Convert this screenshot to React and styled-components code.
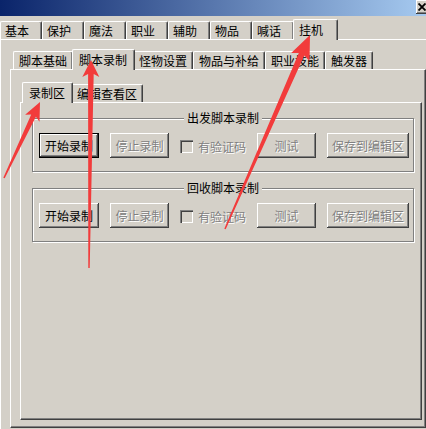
import React from "react";
import styled, { createGlobalStyle, css } from "styled-components";

const GlobalStyle = createGlobalStyle`
  html, body { margin: 0; padding: 0; background: #d4d0c8; }
  body {
    font-family: "SimSun", "Noto Sans CJK SC", sans-serif;
    font-size: 12px;
    color: #000;
  }
  * { box-sizing: border-box; }
`;

const Window = styled.div`
  position: relative;
  width: 426px;
  height: 429px;
  overflow: hidden;
  background: #d4d0c8;
  display: flex;
  flex-direction: column;
`;

const TitleBar = styled.div`
  flex: none;
  height: 16px;
  background: linear-gradient(to right, #0a246a, #a6caf0);
  display: flex;
  justify-content: flex-end;
  align-items: flex-start;
`;

const CloseButton = styled.div`
  flex: none;
  width: 16px;
  height: 14px;
  margin-right: -6px;
  padding-left: 2px;
  background: #d4d0c8;
  box-shadow: inset -1px -1px #404040, inset 1px 1px #fff, inset -2px -2px #808080;
  display: flex;
  align-items: center;
`;

const TabControl = styled.div`
  display: flex;
  flex-direction: column;
  flex: none;
  margin-top: ${(p) => p.$top || 0}px;
`;

const TabStrip = styled.div`
  display: flex;
  align-items: flex-end;
  height: 21px;
  margin-bottom: -1px;
  padding-left: ${(p) => p.$indent}px;
  position: relative;
  z-index: 2;
`;

const Tab = styled.div`
  flex: none;
  height: ${(p) => (p.$active ? 21 : 18)}px;
  ${(p) =>
    p.$w &&
    css`
      width: ${p.$active ? p.$w + 3 : p.$w}px;
    `}
  margin: 0 ${(p) => (p.$active ? -2 : 0)}px ${(p) => (p.$active ? 0 : 1)}px
    ${(p) => (p.$active ? -1 : 0)}px;
  padding: ${(p) => (p.$active ? 2 : 1)}px ${(p) => (p.$active ? p.$pr + 2 : p.$pr)}px 0
    ${(p) => (p.$active ? p.$pl + 1 : p.$pl)}px;
  background: #d4d0c8;
  border-top: 1px solid #fff;
  border-left: 1px solid #fff;
  border-right: 1px solid #404040;
  border-radius: 2px 2px 0 0;
  box-shadow: inset -1px 0 #808080;
  line-height: 16px;
  white-space: nowrap;
  position: relative;
  z-index: ${(p) => (p.$active ? 2 : 1)};
`;

const Panel = styled.div`
  flex: none;
  width: ${(p) => p.$w}px;
  height: ${(p) => p.$h}px;
  padding: ${(p) => p.$pt}px 0 0 ${(p) => p.$pl}px;
  background: #d4d0c8;
  border-top: 1px solid #fff;
  border-left: 1px solid #fff;
  border-right: 1px solid #404040;
  border-bottom: 1px solid #404040;
  box-shadow: inset -1px -1px #808080;
  display: flex;
  flex-direction: column;
  align-items: flex-start;
`;

const GroupBox = styled.div`
  flex: none;
  width: 382px;
  height: 54px;
  border: 1px solid #808080;
  box-shadow: inset 1px 1px #fff, 1px 1px #fff;
  padding: 0 6px;
  display: flex;
  flex-direction: column;
  & + & {
    margin-top: 16px;
  }
`;

const GroupTitle = styled.div`
  margin: -8px auto 0;
  padding: 0 3px;
  line-height: 14px;
  background: #d4d0c8;
  white-space: nowrap;
`;

const ButtonRow = styled.div`
  display: flex;
  align-items: center;
  gap: 11px;
  margin-top: 8px;
`;

const Button = styled.button`
  flex: none;
  width: ${(p) => p.$w}px;
  height: 25px;
  padding: 0;
  margin: 0;
  border: none;
  font: inherit;
  line-height: 14px;
  background: #d4d0c8;
  color: #000;
  box-shadow: inset -1px -1px #404040, inset 1px 1px #fff, inset -2px -2px #808080;
  display: flex;
  align-items: center;
  justify-content: center;
  ${(p) =>
    p.$default &&
    css`
      border: 1px solid #000;
    `}
  &:disabled {
    color: #808080;
    text-shadow: 1px 1px 0 #fff;
  }
`;

const CheckLabel = styled.label`
  flex: none;
  display: flex;
  align-items: center;
  gap: 5px;
  margin-top: 2px;
  color: ${(p) => (p.$disabled ? "#808080" : "#000")};
  text-shadow: ${(p) => (p.$disabled ? "1px 1px 0 #fff" : "none")};
  line-height: 14px;
`;

const CheckBox = styled.span`
  flex: none;
  width: 13px;
  height: 13px;
  background: #d4d0c8;
  box-shadow: inset 1px 1px #808080, inset 2px 2px #404040, inset -1px -1px #fff,
    inset -2px -2px #d4d0c8;
`;

const Overlay = styled.svg`
  position: absolute;
  left: 0;
  top: 0;
  pointer-events: none;
  z-index: 10;
`;

const outerTabs = ["基本", "保护", "魔法", "职业", "辅助", "物品", "喊话", "挂机"];
const midTabs = ["脚本基础", "脚本录制", "怪物设置", "物品与补给", "职业技能", "触发器"];
const innerTabs = ["录制区", "编辑查看区"];

const groups = ["出发脚本录制", "回收脚本录制"];

const arrows = [
  { x1: 4, y1: 178, x2: 40, y2: 102, head: 18, half: 8, neck: 2.6, tail: 0.8 },
  { x1: 89, y1: 268, x2: 91, y2: 60, head: 17, half: 8.5, neck: 2.8, tail: 0.7 },
  { x1: 225, y1: 229, x2: 310, y2: 35, head: 24, half: 10, neck: 3, tail: 0.8 },
];

function arrowPoints({ x1, y1, x2, y2, head, half, neck, tail }) {
  const dx = x2 - x1;
  const dy = y2 - y1;
  const L = Math.hypot(dx, dy);
  const ux = dx / L;
  const uy = dy / L;
  const nx = -uy;
  const ny = ux;
  const p = (d, o) => [x1 + ux * d + nx * o, y1 + uy * d + ny * o];
  const base = L - head;
  const pts = [
    p(0, tail),
    p(base + 3, neck),
    p(base, half),
    p(L, 0),
    p(base, -half),
    p(base + 3, -neck),
    p(0, -tail),
  ];
  return pts.map((q) => q.map((v) => v.toFixed(1)).join(",")).join(" ");
}

function Group({ title, focused }) {
  return (
    <GroupBox>
      <GroupTitle>{title}</GroupTitle>
      <ButtonRow>
        <Button $w={60} $default={focused}>开始录制</Button>
        <Button $w={59} disabled>停止录制</Button>
        <CheckLabel $disabled>
          <CheckBox />
          有验证码
        </CheckLabel>
        <Button $w={59} disabled>测试</Button>
        <Button $w={82} disabled>保存到编辑区</Button>
      </ButtonRow>
    </GroupBox>
  );
}

export default function App() {
  return (
    <>
      <GlobalStyle />
      <Window>
        <TitleBar>
          <CloseButton>
            <svg width="8" height="8" viewBox="0 0 8 8">
              <path d="M0.5 0.5 L7.5 7.5 M7.5 0.5 L0.5 7.5" stroke="#000" strokeWidth="1.8" />
            </svg>
          </CloseButton>
        </TitleBar>

        <TabControl $top={3}>
          <TabStrip $indent={0}>
            {outerTabs.map((t) => (
              <Tab key={t} $w={42} $pl={4} $pr={0} $active={t === "挂机"}>
                {t}
              </Tab>
            ))}
          </TabStrip>
          <Panel $w={440} $h={400} $pt={9} $pl={9}>
            <TabControl>
              <TabStrip $indent={3}>
                {midTabs.map((t) => (
                  <Tab key={t} $pl={5} $pr={5} $active={t === "脚本录制"}>
                    {t}
                  </Tab>
                ))}
              </TabStrip>
              <Panel $w={416} $h={359} $pt={12} $pl={9}>
                <TabControl>
                  <TabStrip $indent={3}>
                    {innerTabs.map((t) => (
                      <Tab key={t} $pl={5} $pr={5} $active={t === "录制区"}>
                        {t}
                      </Tab>
                    ))}
                  </TabStrip>
                  <Panel $w={402} $h={318} $pt={15} $pl={11}>
                    {groups.map((g, i) => (
                      <Group key={g} title={g} focused={i === 0} />
                    ))}
                  </Panel>
                </TabControl>
              </Panel>
            </TabControl>
          </Panel>
        </TabControl>

        <Overlay width="426" height="429" viewBox="0 0 426 429">
          {arrows.map((a, i) => (
            <polygon key={i} points={arrowPoints(a)} fill="#f23b3b" />
          ))}
        </Overlay>
      </Window>
    </>
  );
}
